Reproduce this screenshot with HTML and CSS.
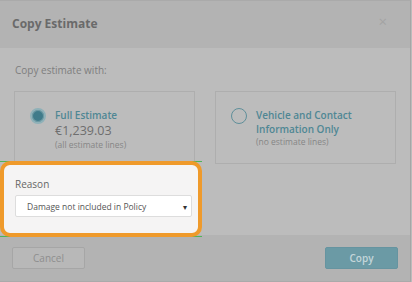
FILE: index.html
```html
<!DOCTYPE html>
<html lang="en">
<head>
    <meta charset="UTF-8">
    <meta name="viewport" content="width=device-width, initial-scale=1.0">
    <title>Copy Estimate</title>
    <link rel="stylesheet" href="styles.css">
</head>
<body>

    <div class="modal">
        <!-- Header -->
        <div class="modal-header">
            <h1>Copy Estimate</h1>
            <span class="close">&times;</span>
        </div>

        <!-- Body -->
        <div class="modal-body">
            <p class="intro">Copy estimate with:</p>
            <div class="options">
                <div class="option">
                    <span class="radio checked"></span>
                    <div class="option-text">
                        <div class="option-title">Full Estimate</div>
                        <div class="option-amount">€1,239.03</div>
                        <div class="option-note">(all estimate lines)</div>
                    </div>
                </div>
                <div class="option">
                    <span class="radio"></span>
                    <div class="option-text">
                        <div class="option-title">Vehicle and Contact Information Only</div>
                        <div class="option-note">(no estimate lines)</div>
                    </div>
                </div>
            </div>

            <!-- Highlighted reason field -->
            <div class="reason-frame">
                <div class="reason">
                    <label>Reason</label>
                    <div class="select">
                        <span>Damage not included in Policy</span>
                        <span class="caret">&#9662;</span>
                    </div>
                </div>
            </div>
        </div>

        <!-- Footer -->
        <div class="modal-footer">
            <button class="btn btn-cancel">Cancel</button>
            <button class="btn btn-copy">Copy</button>
        </div>
    </div>

</body>
</html>
```

FILE: styles.css
```css
* {
    box-sizing: border-box;
}

body {
    margin: 0;
    font-family: 'Open Sans', 'Noto Sans', sans-serif;
    background: #bcbcbc;
}

.modal {
    width: 411px;
    height: 282px;
    display: flex;
    flex-direction: column;
    border-top: 1px solid #aaaaaa;
    border-right: 1px solid #a6a6a6;
    border-bottom: 1px solid #aaaaaa;
}

.modal-header {
    height: 47px;
    background: #b3b3b3;
    display: flex;
    align-items: center;
    justify-content: space-between;
    padding: 0 23px 0 12px;
}

.modal-header h1 {
    margin: 0 0 3px;
    font-size: 12px;
    font-weight: 700;
    color: #6a6a6a;
}

.close {
    font-size: 15px;
    color: #a3a3a3;
    margin-bottom: 8px;
}

.modal-body {
    flex: 1;
    position: relative;
    background: #bcbcbc;
    padding: 14px 14px 0;
}

.intro {
    margin: 0 0 13px 1px;
    font-size: 10px;
    color: #7e7e7e;
    line-height: 16px;
}

.options {
    display: flex;
    gap: 20px;
}

.option {
    flex: 1;
    height: 73px;
    border: 1px solid #aeaeae;
    display: flex;
    align-items: flex-start;
    padding: 15px 0 0 15px;
}

.radio {
    width: 16px;
    height: 16px;
    border-radius: 50%;
    border: 1.5px solid #5f8f9a;
    margin-top: 1px;
    flex-shrink: 0;
}

.radio.checked {
    border: 2px solid #8fb1b8;
    background: #3f7b8a;
    box-shadow: inset 0 0 0 1px #6e9aa4;
}

.option-text {
    margin-left: 9px;
    padding-right: 8px;
}

.option-title {
    font-size: 10px;
    font-weight: 600;
    color: #4f8794;
    line-height: 14px;
    margin-top: 1px;
}

.option-amount {
    font-size: 12.5px;
    color: #6e6e6e;
    line-height: 17px;
}

.option-note {
    font-size: 8.5px;
    color: #868686;
    line-height: 11px;
}

/* highlight around the reason field */
.reason-frame {
    position: absolute;
    left: 0;
    top: 113px;
    width: 202px;
    height: 76px;
    border-top: 1px solid #4fb35a;
    border-bottom: 1px solid #4fb35a;
}

.reason {
    height: calc(100% + 2px);
    margin-top: -1px;
    border: 4px solid #ef9a2b;
    border-radius: 10px;
    background: #f5f4f4;
    padding: 12px 6px 0 11px;
}

.reason label {
    display: block;
    font-size: 10px;
    color: #666666;
    line-height: 14px;
    margin-bottom: 4px;
}

.select {
    height: 22px;
    background: #ffffff;
    border: 1px solid #dddddd;
    border-radius: 2px;
    display: flex;
    align-items: center;
    justify-content: space-between;
    padding: 0 4px 0 11px;
    font-size: 8.5px;
    color: #555555;
}

.caret {
    font-size: 8px;
    color: #333333;
}

.modal-footer {
    height: 46px;
    background: #b3b3b3;
    display: flex;
    align-items: center;
    justify-content: space-between;
    padding: 0 12px;
}

.btn {
    width: 73px;
    height: 22px;
    border-radius: 2px;
    font-family: inherit;
    font-size: 10px;
    padding: 0;
}

.btn-cancel {
    background: #b8b8b8;
    border: 1px solid #a6a6a6;
    color: #8e8e8e;
}

.btn-copy {
    background: #6b9aa5;
    border: 1px solid #6694a0;
    color: #c4d6da;
    font-weight: 600;
}
```
